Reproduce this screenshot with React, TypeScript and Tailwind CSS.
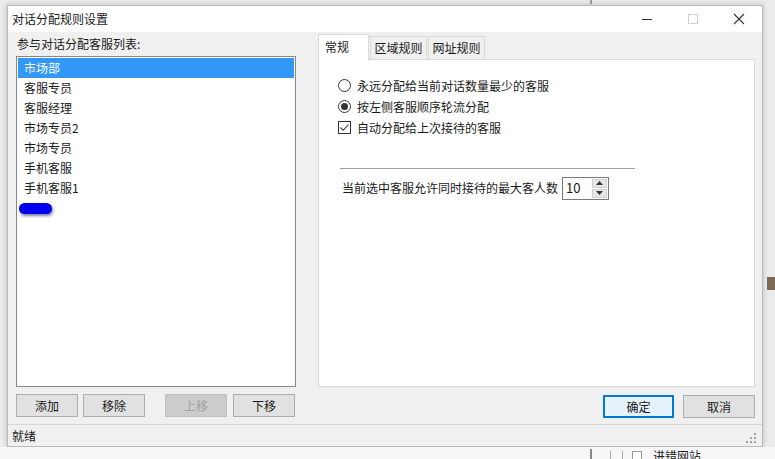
import React from 'react';

const font = { fontFamily: '"Noto Sans CJK SC", "Noto Sans", sans-serif' };

const members = ['市场部', '客服专员', '客服经理', '市场专员2', '市场专员', '手机客服', '手机客服1'];

const Btn: React.FC<{ label: string; w: string; disabled?: boolean; focused?: boolean }> = ({ label, w, disabled, focused }) => (
    <div
        className={`${w} h-[23px] flex items-center justify-center text-[12px] ${disabled
            ? 'bg-[#cccccc] border border-[#bfbfbf] text-[#a0a0a0]'
            : focused
                ? 'bg-[#e5f1fb] border-2 border-[#0078d7] text-[#1a1a1a]'
                : 'bg-[#e1e1e1] border border-[#adadad] text-[#1a1a1a]'
            }`}
    >
        {label}
    </div>
);

export default function App() {
    return (
        <div className="w-[775px] h-[459px] bg-[#ececec] relative overflow-hidden" style={font}>
            {/* desktop behind */}
            <div className="absolute left-[590px] top-0 w-[2px] h-[4px] bg-[#9a9a9a]" />
            <div className="absolute right-0 top-[277px] w-[8px] h-[13px] bg-[#7a6a55]" />
            <div className="absolute left-0 right-0 top-[447px] h-[12px] bg-[#f7f7f7]" />
            <div className="absolute left-[590px] top-[449px] w-[2px] h-[10px] bg-[#888]" />
            <div className="absolute left-[610px] top-[451px] w-[1px] h-[8px] bg-[#aaa]" />
            <div className="absolute left-[622px] top-[451px] w-[1px] h-[8px] bg-[#aaa]" />
            <div className="absolute left-[632px] top-[451px] w-[10px] h-[10px] border border-[#999] bg-white" />
            <div className="absolute left-[653px] top-[450px] text-[12px] text-[#222] leading-none">进错网站</div>

            <div className="pt-[5px] pl-[7px]">
                <div className="w-[756px] h-[442px] flex flex-col border border-[#b9b9b9] shadow-[0_0_6px_rgba(0,0,0,0.2)] bg-[#f0f0f0]">
                    {/* title bar */}
                    <div className="h-[26px] bg-white flex items-center">
                        <div className="pl-[4px] text-[12px] text-[#1a1a1a] flex-1">对话分配规则设置</div>
                        <div className="flex items-center h-full">
                            <div className="w-[46px] h-full flex items-center justify-center">
                                <div className="w-[10px] h-[1px] bg-[#333]" />
                            </div>
                            <div className="w-[46px] h-full flex items-center justify-center">
                                <div className="w-[10px] h-[10px] border border-[#cfcfcf]" />
                            </div>
                            <div className="w-[46px] h-full flex items-center justify-center">
                                <svg width="12" height="12" viewBox="0 0 12 12">
                                    <path d="M1 1 L11 11 M11 1 L1 11" stroke="#333" strokeWidth="1.1" />
                                </svg>
                            </div>
                        </div>
                    </div>

                    {/* body */}
                    <div className="flex-1 flex pl-[8px] pr-[7px]">
                        {/* left column */}
                        <div className="w-[280px] flex flex-col">
                            <div className="h-[24px] pt-[5px] pl-[1px] text-[12px] leading-[14px] text-[#1a1a1a]">参与对话分配客服列表:</div>
                            <div className="h-[331px] bg-white border border-[#828790] pt-[1px] px-[1px]">
                                {members.map((m, i) => (
                                    <div
                                        key={m}
                                        className={`h-[20px] pl-[6px] flex items-center text-[12px] ${i === 0 ? 'bg-[#3297f7] text-white' : 'text-[#1a1a1a]'}`}
                                    >
                                        {m}
                                    </div>
                                ))}
                                <div className="h-[20px] flex items-center pl-[1px]">
                                    <div className="w-[33px] h-[11px] rounded-full bg-[#0000ee] shadow-[1px_2px_3px_rgba(0,0,80,0.5)]" />
                                </div>
                            </div>
                            <div className="flex mt-[7px]">
                                <Btn label="添加" w="w-[62px]" />
                                <div className="ml-[5px]"><Btn label="移除" w="w-[62px]" /></div>
                                <div className="ml-[20px]"><Btn label="上移" w="w-[62px]" disabled /></div>
                                <div className="ml-[6px]"><Btn label="下移" w="w-[62px]" /></div>
                            </div>
                        </div>

                        {/* right column */}
                        <div className="ml-[22px] flex-1 flex flex-col">
                            <div className="h-[27px] pt-[1px] flex items-end">
                                <div className="w-[51px] h-[26px] bg-white border border-b-0 border-[#d9d9d9] pl-[6px] pt-[3px] text-[12px] text-[#1a1a1a] relative top-[1px]">常规</div>
                                <div className="ml-[1px] w-[57px] h-[23px] bg-[#f0f0f0] border border-b-0 border-[#d9d9d9] flex items-center justify-center text-[12px] text-[#1a1a1a]">区域规则</div>
                                <div className="ml-[1px] w-[57px] h-[23px] bg-[#f0f0f0] border border-b-0 border-[#d9d9d9] flex items-center justify-center text-[12px] text-[#1a1a1a]">网址规则</div>
                            </div>
                            <div className="h-[328px] bg-white border border-[#d9d9d9] pl-[19px] pt-[15px] text-[12px] text-[#1a1a1a]">
                                <div className="h-[21px] flex items-center">
                                    <div className="w-[13px] h-[13px] rounded-full border border-[#333] bg-white" />
                                    <span className="ml-[6px]">永远分配给当前对话数量最少的客服</span>
                                </div>
                                <div className="h-[21px] flex items-center">
                                    <div className="w-[13px] h-[13px] rounded-full border border-[#333] bg-white flex items-center justify-center">
                                        <div className="w-[7px] h-[7px] rounded-full bg-[#333]" />
                                    </div>
                                    <span className="ml-[6px]">按左侧客服顺序轮流分配</span>
                                </div>
                                <div className="h-[21px] flex items-center">
                                    <div className="w-[13px] h-[13px] border border-[#333] bg-white flex items-center justify-center">
                                        <svg width="11" height="11" viewBox="0 0 11 11">
                                            <path d="M1.5 5.5 L4.2 8.3 L9.5 2.5" stroke="#333" strokeWidth="1.1" fill="none" />
                                        </svg>
                                    </div>
                                    <span className="ml-[6px]">自动分配给上次接待的客服</span>
                                </div>
                                <div className="mt-[30px] ml-[2px] w-[295px] h-[2px] border-t border-[#a0a0a0] border-b border-b-white" />
                                <div className="mt-[6px] ml-[4px] h-[24px] flex items-center">
                                    <span>当前选中客服允许同时接待的最大客人数</span>
                                    <div className="ml-[4px] w-[47px] h-[23px] border border-[#7a7a7a] bg-white flex items-center">
                                        <span className="pl-[3px] flex-1 text-[13px]">10</span>
                                        <div className="w-[15px] h-[19px] mr-[1px] flex flex-col gap-[1px]">
                                            <div className="flex-1 bg-[#e6e6e6] border border-[#cfcfcf] flex items-center justify-center">
                                                <svg width="7" height="4" viewBox="0 0 7 4"><path d="M0 4 L3.5 0 L7 4 Z" fill="#333" /></svg>
                                            </div>
                                            <div className="flex-1 bg-[#e6e6e6] border border-[#cfcfcf] flex items-center justify-center">
                                                <svg width="7" height="4" viewBox="0 0 7 4"><path d="M0 0 L3.5 4 L7 0 Z" fill="#333" /></svg>
                                            </div>
                                        </div>
                                    </div>
                                </div>
                            </div>
                            <div className="flex justify-end mt-[8px]">
                                <Btn label="确定" w="w-[71px]" focused />
                                <div className="ml-[9px]"><Btn label="取消" w="w-[72px]" /></div>
                            </div>
                        </div>
                    </div>

                    {/* status bar */}
                    <div className="h-[22px] border-t border-[#d7d7d7] flex items-center pl-[4px] text-[12px] text-[#1a1a1a] relative">
                        就绪
                        <svg className="absolute right-[6px] bottom-[3px]" width="10" height="10" viewBox="0 0 10 10">
                            <g fill="#a0a0a0">
                                <rect x="8" y="0" width="2" height="2" />
                                <rect x="4" y="4" width="2" height="2" />
                                <rect x="8" y="4" width="2" height="2" />
                                <rect x="0" y="8" width="2" height="2" />
                                <rect x="4" y="8" width="2" height="2" />
                                <rect x="8" y="8" width="2" height="2" />
                            </g>
                        </svg>
                    </div>
                </div>
            </div>
        </div>
    );
}
